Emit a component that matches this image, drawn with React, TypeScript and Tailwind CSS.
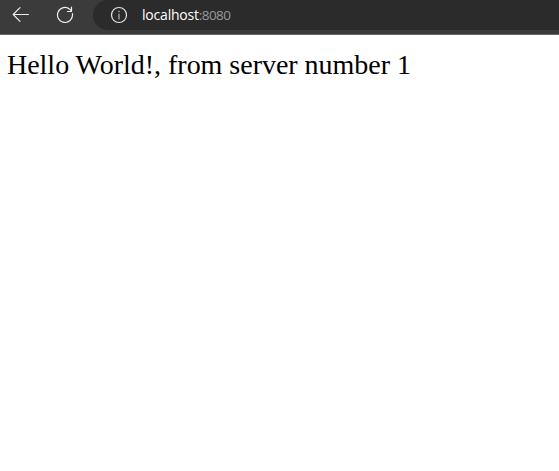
export default function App() {
  return (
    <div className="flex h-[471px] w-[559px] flex-col overflow-hidden bg-white">
      <header className="flex h-[35px] items-start border-b border-[#666666] bg-[#3b3b3b]">
        <div className="flex h-[30px] w-[93px] items-center pl-3">
          <svg className="h-[18px] w-[18px]" viewBox="0 0 18 18" fill="none" stroke="#eeeeee" strokeWidth="1.1" strokeLinecap="round" strokeLinejoin="round">
            <path d="M16.5 8.5H1.2M8 1.7 1.2 8.5 8 15.3" />
          </svg>
          <svg className="ml-[26px] h-[18px] w-[18px]" viewBox="0 0 18 18" fill="none" stroke="#eeeeee" strokeWidth="1.2" strokeLinecap="round" strokeLinejoin="round">
            <path d="M16.4 7.7A7.5 7.5 0 1 1 13.8 3.2L15.5 5.1M15.5 1.2V5.5H11.5" />
          </svg>
        </div>
        <div className="flex h-[30px] flex-1 items-center rounded-l-full bg-[#2b2b2b] pl-[17px]">
          <svg className="h-[18px] w-[18px]" viewBox="0 0 18 18" fill="none" stroke="#e4e4e4" strokeWidth="1.2">
            <circle cx="9" cy="9" r="7.5" />
            <path d="M9 8v5" stroke="#b5b5b5" strokeLinecap="round" />
            <circle cx="9" cy="5.5" r=".8" fill="#b5b5b5" stroke="none" />
          </svg>
          <span className="ml-[14px] whitespace-nowrap font-['Open_Sans',sans-serif] text-[14px] leading-[20px] font-medium tracking-[-0.2px] text-white">localhost<span className="text-[13.5px] leading-none font-normal tracking-[-0.6px] text-[#999999]">:8080</span></span>
        </div>
      </header>
      <main className="px-[7px] pt-[14px] font-['Liberation_Serif',serif] text-[28px] leading-8 tracking-[-0.02px] text-black">Hello World!, from server number 1</main>
    </div>
  );
}
